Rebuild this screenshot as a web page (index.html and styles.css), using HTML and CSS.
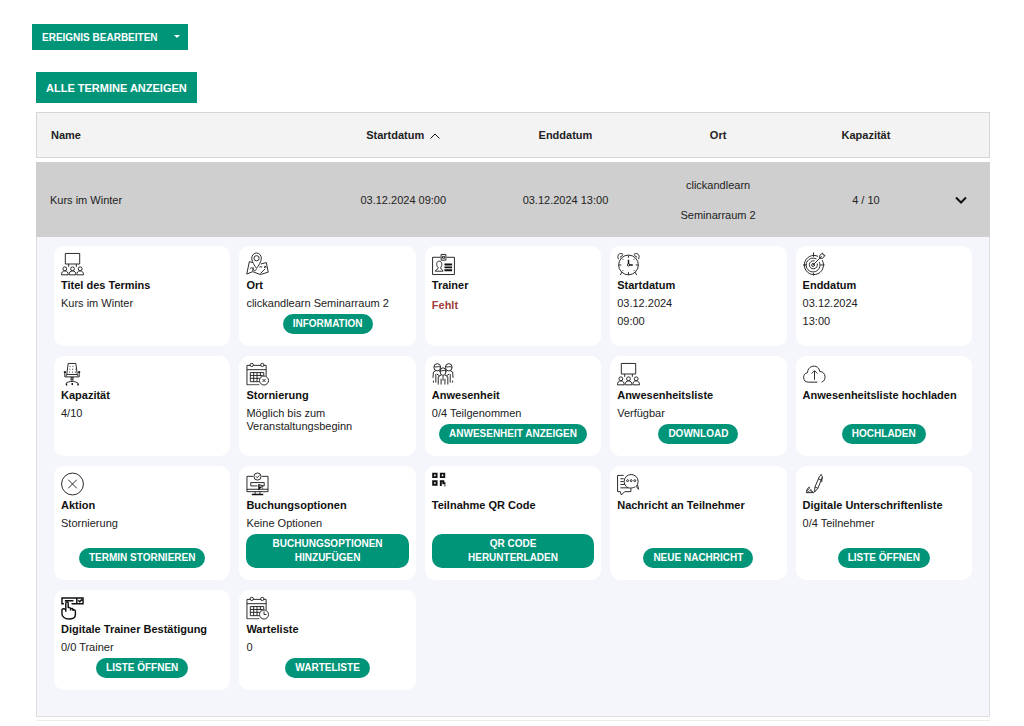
FILE: index.html
```html
<!DOCTYPE html>
<html lang="de">
<head>
<meta charset="utf-8">
<title>Termine</title>
<meta name="viewport" content="width=device-width, initial-scale=1">
<link rel="stylesheet" href="styles.css">
</head>
<body>
<svg class="sprite" aria-hidden="true">
  <symbol id="audience" viewBox="0 0 24 24">
    <path d="M4.500 1h15v11h-15zM8 12v3M16 12v3"/>
    <circle cx="4" cy="17" r="2"/><circle cx="12" cy="17" r="2"/><circle cx="20" cy="17" r="2"/>
    <path d="M.5 23.300c0-2.500 1-4.100 3.500-4.100s3.500 1.600 3.500 4.100zM8.500 23.300c0-2.500 1-4.100 3.500-4.100s3.500 1.600 3.500 4.100zM16.500 23.300c0-2.500 1-4.100 3.500-4.100s3.500 1.600 3.500 4.100z"/>
  </symbol>
  <symbol id="calendar" viewBox="0 0 24 24">
    <path d="M4.500 3H1v20.300H14M7.500 3h8M18.500 3h2.500v11M1 7.500H21"/>
    <circle cx="6" cy="2.500" r="1.700"/><circle cx="17" cy="2.500" r="1.700"/>
    <path d="M4.500 10.500H18.500V14M4.500 10.500v9.500h9M4.500 13.500h13M4.500 16.500h10M8 10.500v9.500M11.500 10.500v9.500M15 10.500v4"/>
  </symbol>
</svg>

<main class="page">
  <div class="split">
    <button class="split-main" type="button">EREIGNIS BEARBEITEN</button>
    <button class="split-toggle" type="button" aria-label="Weitere Aktionen"><svg viewBox="0 0 6 4"><path d="M0 0h6L3 3z"/></svg></button>
  </div>

  <div class="content">
    <button class="show-all" type="button">ALLE TERMINE ANZEIGEN</button>

    <table class="dates">
      <colgroup>
        <col class="col-name"><col class="col-date"><col class="col-date"><col class="col-place"><col class="col-cap"><col>
      </colgroup>
      <thead>
        <tr>
          <th class="name">Name</th>
          <th>Startdatum <svg class="sort" viewBox="0 0 10 6"><path d="M.5 5.500 5 1l4.500 4.500"/></svg></th>
          <th>Enddatum</th>
          <th>Ort</th>
          <th>Kapazität</th>
          <th></th>
        </tr>
      </thead>
      <tbody>
        <tr class="entry">
          <td class="name">Kurs im Winter</td>
          <td>03.12.2024 09:00</td>
          <td>03.12.2024 13:00</td>
          <td class="place">clickandlearn<br>Seminarraum 2</td>
          <td>4 / 10</td>
          <td class="toggle"><button type="button" aria-label="Details"><svg viewBox="0 0 12 8"><path d="m1 1.500 5 5 5-5"/></svg></button></td>
        </tr>
        <tr>
          <td class="details" colspan="6">
            <div class="cards">
              <section class="card">
                <svg class="icon"><use href="#audience"/></svg>
                <h3>Titel des Termins</h3>
                <p>Kurs im Winter</p>
              </section>
              <section class="card">
                <svg class="icon" viewBox="0 0 24 24"><path d="M11 16.500S6 10.500 6 6a5 5.500 0 0 1 10 0C16 10.500 11 16.500 11 16.500z"/><circle cx="11" cy="6" r="2.700"/><path d="M7 10.500 3.500 9.500.8 22.500l6.200-2.500 8 3 8.200-2.500-2-10-5.700 1.500M7 19.500l.5-4M4 17c2-2 3-1 4 1s2 1 3-1M15 22l5-5"/><path d="M14 15h3M19 14l2 2M21 14l-2 2"/></svg>
                <h3>Ort</h3>
                <p>clickandlearn Seminarraum 2</p>
                <button class="action" type="button">INFORMATION</button>
              </section>
              <section class="card">
                <svg class="icon" viewBox="0 0 24 24"><path d="M9 5H.6v18h22.800V5H15M9.500 2h5v6h-5zM11 4h2v2h-2z"/><path d="M3.500 19.500c0-2 3-1.500 3-3.500C4 13 4.500 9 7.500 9s3.500 4 1.500 7c0 2 2.500 1.500 2.500 3.500z"/><path class="thick" d="M13 12.500h8M13 15.500h8M13 18.500h8"/></svg>
                <h3>Trainer</h3>
                <p class="missing">Fehlt</p>
              </section>
              <section class="card">
                <svg class="icon" viewBox="0 0 24 24"><circle cx="12" cy="13" r="10.300"/><path d="M1.500 7C-.5 2.500 3-.5 6.500 2M22.500 7c2-4.500-1.500-7.500-5-5M3 5l3-2M21 5l-3-2M5 20.500l-1.500 3M19 20.500l1.500 3M12 3v2.500M12 20.500v2.500M2 13h2.500M19.500 13h2.500M5.500 6.500l1 1M18.500 6.500l-1 1M5.500 19.500l1-1M18.500 19.500l-1-1"/><circle cx="12" cy="13" r="1.200"/><path class="medium" d="M12 7.500V12M13 13h3.500"/></svg>
                <h3>Startdatum</h3>
                <p>03.12.2024<br>09:00</p>
              </section>
              <section class="card">
                <svg class="icon" viewBox="0 0 24 24"><path d="M15.800 4.100A10 10 0 1 0 20 8M14 6.800A7.200 7.200 0 1 0 17 10"/><path d="M12 8.800a4.200 4.200 0 1 0 2.800 2.700M11 0v4.500M11 21.500v2.500M0 13h4M18 13h4.500"/><circle cx="10.500" cy="13" r="1.500"/><path d="m10.500 13 9-9M17.500 6V3l3-2.500.5 2 2 .5-2.500 3z"/></svg>
                <h3>Enddatum</h3>
                <p>03.12.2024<br>13:00</p>
              </section>

              <section class="card">
                <svg class="icon" viewBox="0 0 24 24"><path d="M7.500 1h8l1.500 11.500H6z"/><path d="M4 9.500v5.500h15V9.500M5.500 12.500v2M17.500 12.500v2M11.500 15v4M10.500 15v4M12.500 15v4M5 22c3-3 10-3 13 0"/><path class="thick" d="M3 10h2M18 10h2M5 23h1.500M17 23h1.500M11 22.500h1.500"/><path class="dots" d="M9 4h6M8.700 7h6.500M8.500 10h7"/></svg>
                <h3>Kapazität</h3>
                <p>4/10</p>
              </section>
              <section class="card">
                <svg class="icon" viewBox="0 0 24 24"><use href="#calendar"/><circle class="cover" cx="18.800" cy="18.800" r="4.700"/><path d="m17.300 17.300 3 3M20.300 17.300l-3 3"/></svg>
                <h3>Stornierung</h3>
                <p class="dense">Möglich bis zum Veranstaltungsbeginn</p>
              </section>
              <section class="card">
                <svg class="icon" viewBox="0 0 24 24"><ellipse cx="5.500" cy="5" rx="3.500" ry="3.800"/><ellipse cx="17.500" cy="5" rx="3.500" ry="3.800"/><ellipse cx="11.500" cy="9.500" rx="3" ry="4"/><path d="M2 4c2 2 4-1 7 1M14 4c2 2 4-1 7 1M8.500 8c2 2 4-1 6 1M4 8.500 1.500 10 1 16M7 8.500l2 1M19 8.500l2.500 1.500.5 6M16 8.500l-2 1M9.500 13 6.500 15v8M13.500 13l3 2v8M11.500 14v5M9.500 17v6M13.500 17v6M4 12v9M19 12v9M1.500 19v2M21.500 19v2M5 12l3 2M18 12l-3 2"/></svg>
                <h3>Anwesenheit</h3>
                <p>0/4 Teilgenommen</p>
                <button class="action" type="button">ANWESENHEIT ANZEIGEN</button>
              </section>
              <section class="card">
                <svg class="icon"><use href="#audience"/></svg>
                <h3>Anwesenheitsliste</h3>
                <p>Verfügbar</p>
                <button class="action" type="button">DOWNLOAD</button>
              </section>
              <section class="card">
                <svg class="icon" viewBox="0 0 24 24"><path d="M15 20.500H5.500A5 5 0 0 1 4.700 10.600C5.200 1.500 17 2 17.300 9.300c7.200.2 7.200 9.700 2.200 11.200M12 18V9M9 11.500 12 8.500l3 3"/></svg>
                <h3>Anwesenheitsliste hochladen</h3>
                <button class="action" type="button">HOCHLADEN</button>
              </section>

              <section class="card">
                <svg class="icon" viewBox="0 0 24 24"><circle cx="12" cy="12" r="11.400"/><path d="m7.500 7.500 9 9M16.500 7.500l-9 9"/></svg>
                <h3>Aktion</h3>
                <p>Stornierung</p>
                <button class="action" type="button">TERMIN STORNIEREN</button>
              </section>
              <section class="card">
                <svg class="icon" viewBox="0 0 24 24"><path d="M7.500 4H1v16h22V4h-6.500M1 17.500h22M9.500 20v3M14.500 20v3"/><circle cx="12" cy="4.200" r="3.700"/><path d="m10.300 4 1.400 1.500 2.300-2.500"/><path d="M12 14H5v-3.500h14V14h-1M13 12.500l5 1.500-2 1 2 2"/><path class="medium" d="M6 23h12M13.500 12.500v4.500l2-2"/></svg>
                <h3>Buchungsoptionen</h3>
                <p>Keine Optionen</p>
                <button class="action wide" type="button">BUCHUNGSOPTIONEN<br>HINZUFÜGEN</button>
              </section>
              <section class="card">
                <svg class="icon" viewBox="0 0 24 24"><path class="thick" d="M1.200 1.200h3.600v3.600H1.200zM9.200 1.200h3.600v3.600H9.200zM1.200 9.200h3.600v3.600H1.200zM9.200 14V9.200h2.600v2H14M13 13.500h1"/></svg>
                <h3>Teilnahme QR Code</h3>
                <button class="action wide" type="button">QR CODE<br>HERUNTERLADEN</button>
              </section>
              <section class="card">
                <svg class="icon" viewBox="0 0 24 24"><path d="M7 3H.6v17h2.900l1 3.500L8 20h6.500v-3.500"/><path d="M9.500 14.500A7.300 7.300 0 1 1 20 14.500l2.500 3-1-4.500M9.500 14.500c2 2 5 2.500 9.500.5"/><circle cx="11" cy="8.500" r="1"/><circle cx="14.800" cy="8.500" r="1"/><circle cx="18.600" cy="8.500" r="1"/><path d="M3.500 6.500H7M3.500 9.500H7M3.500 12.500H8M3.500 16H12"/></svg>
                <h3>Nachricht an Teilnehmer</h3>
                <button class="action" type="button">NEUE NACHRICHT</button>
              </section>
              <section class="card">
                <svg class="icon" viewBox="0 0 24 24"><path d="M12 20.500 12.500 15 17 4.500c1-2.500 4-1.500 3 1L15.500 16.500zM12.500 15l3 1.500M16 6.500l3 1.500M18.500 3l.5-1.500M20 5l-.500 5M3.500 19c5-2 3.500-6 1.500-2.500s-1 5.500 1.500 3 2-2 2 0 2-1 2.500 1.500H3"/></svg>
                <h3>Digitale Unterschriftenliste</h3>
                <p>0/4 Teilnehmer</p>
                <button class="action" type="button">LISTE ÖFFNEN</button>
              </section>

              <section class="card">
                <svg class="icon" viewBox="0 0 24 24"><g class="medium"><path d="M3 7.500H1v-6h22v6H11M16.500 1.500v6M4 4.500h9M18 4l1.500 1.500L22 3"/><path d="M5 16V7c0-2 2.500-2 2.500 0v5M7.500 12c1-1 2.500-.5 2.500 1 1-1 2.500-.5 2.500 1 1-.5 2.500 0 2.500 1.500V19c0 3-3 4.500-7 4.500S1 21 1 18v-4.500c1-1 3-1 4 .500M10 12v2.500M12.500 13v2"/></g></svg>
                <h3>Digitale Trainer Bestätigung</h3>
                <p>0/0 Trainer</p>
                <button class="action" type="button">LISTE ÖFFNEN</button>
              </section>
              <section class="card">
                <svg class="icon" viewBox="0 0 24 24"><use href="#calendar"/><circle class="cover" cx="18.800" cy="18.800" r="4.700"/><path d="M18.800 15.500v3.300h2.500"/></svg>
                <h3>Warteliste</h3>
                <p>0</p>
                <button class="action" type="button">WARTELISTE</button>
              </section>
            </div>
          </td>
        </tr>
      </tbody>
    </table>
    <hr class="rule">
  </div>
</main>
</body>
</html>
```
FILE: styles.css
```css
* { box-sizing: border-box; }

body {
  margin: 0;
  background: #fff;
  color: #222;
  font: 11px/18px "Liberation Sans", Arial, sans-serif;
}

button {
  border: 0;
  background: #009479;
  color: #fff;
  font-family: inherit;
  font-weight: bold;
  cursor: pointer;
}

.sprite { position: absolute; width: 0; height: 0; }

.page { padding: 24px 34px 0 32px; }

.split { display: flex; height: 26px; }
.split-main { padding: 0 8px 0 10px; font-size: 10px; }
.split-toggle { padding: 0 8px; display: flex; align-items: center; }
.split-toggle svg { width: 6px; height: 4px; fill: #fff; }

.content { padding: 22px 0 0 4px; }

.show-all {
  display: block;
  height: 31px;
  padding: 0 10px;
  margin-bottom: 9px;
  font-size: 11px;
}

.dates {
  width: 100%;
  table-layout: fixed;
  border-collapse: separate;
  border-spacing: 0;
}
.col-name { width: 30%; }
.col-date { width: 17%; }
.col-place { width: 15%; }
.col-cap { width: 16%; }

.dates th {
  height: 46px;
  padding: 0;
  background: #f3f3f3;
  border: solid #d6d6d6;
  border-width: 1px 0;
}
.dates th:first-child { border-left-width: 1px; }
.dates th:last-child { border-right-width: 1px; }
.dates .name { padding-left: 14px; text-align: left; }
.sort { width: 10px; height: 6px; margin-left: 3px; fill: none; stroke: #111; }

.dates tbody::before { content: ""; display: block; height: 4px; }
.entry td { height: 75px; padding: 0; background: #cfcfcf; text-align: center; }
.entry .place { line-height: 30px; }
.entry .toggle { padding-right: 10px; }
.toggle button { padding: 0; background: none; }
.toggle svg { display: block; width: 12px; height: 8px; fill: none; stroke: #111; stroke-width: 2; }

.dates .details {
  padding: 9px 17px 26px;
  background: #f5f6fb;
  border: solid #dedede;
  border-width: 0 1px 1px;
}

.cards {
  display: grid;
  grid-template-columns: repeat(5, minmax(0, 1fr));
  grid-auto-rows: minmax(100px, auto);
  gap: 10px 9px;
}

.card {
  display: flex;
  flex-direction: column;
  align-items: flex-start;
  padding: 6px 7px 12px;
  border-radius: 10px;
  background: #fff;
}
.card h3 { margin: 1px 0 0; font-size: 11px; line-height: 17px; color: #111; }
.card p { margin: 0 0 2px; }
.card .dense { padding-top: 3px; line-height: 13px; }
.card .missing { padding-top: 2px; color: #a0403a; font-weight: bold; }

.icon { width: 23px; height: 24px; fill: none; stroke: #222; stroke-width: 1; }
.icon .thick { stroke: #111; stroke-width: 2; }
.icon .medium { stroke: #111; stroke-width: 1.5; }
.icon .dots { stroke-dasharray: 1 2; }
.icon .cover { fill: #fff; }

.action {
  align-self: center;
  margin-top: auto;
  padding: 3px 10px;
  border-radius: 10px;
  font-size: 10px;
  line-height: 14px;
}
.action.wide { align-self: stretch; }

.rule { margin: 3px 0 0; border: 0; border-top: 1px solid #eee; }
```
